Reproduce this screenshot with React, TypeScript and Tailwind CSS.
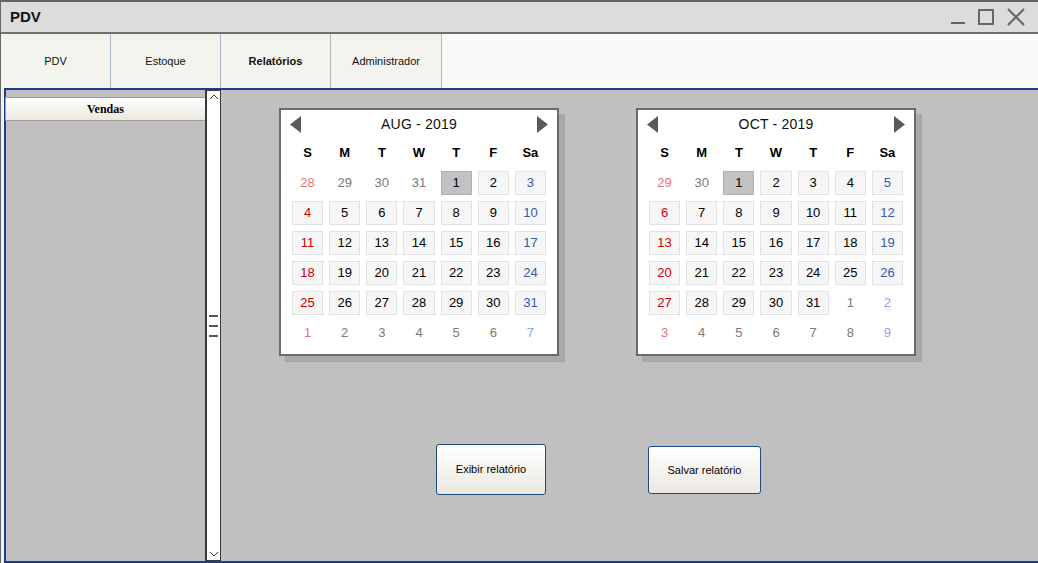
import React from "react";

type Cell = { d: number; out?: boolean; sel?: boolean };

const font = { fontFamily: '"Liberation Sans", Arial, sans-serif' };

function mk(days: number[], firstIn: number, lastIn: number, sel: number): Cell[] {
  // days: flat 42 numbers; indices [firstIn, lastIn] are inside the month
  return days.map((d, i) => ({ d, out: i < firstIn || i > lastIn, sel: i === sel }));
}

const range = (a: number, b: number) => Array.from({ length: b - a + 1 }, (_, i) => a + i);

const aug = mk([...range(28, 31), ...range(1, 31), ...range(1, 7)], 4, 34, 4);
const oct = mk([29, 30, ...range(1, 31), ...range(1, 9)], 2, 32, 2);

const dayNames = ["S", "M", "T", "W", "T", "F", "Sa"];

function cellColor(col: number, out?: boolean) {
  if (col === 0) return out ? "text-[#e57373]" : "text-[#cc0000]";
  if (col === 6) return out ? "text-[#8ea6d8]" : "text-[#3558b0]";
  return out ? "text-[#7a7a7a]" : "text-black";
}

function Arrow({ dir }: { dir: "left" | "right" }) {
  return (
    <svg width="11" height="17" viewBox="0 0 11 17">
      {dir === "left" ? (
        <polygon points="11,0 11,17 0,8.5" fill="#5a5a5a" />
      ) : (
        <polygon points="0,0 0,17 11,8.5" fill="#5a5a5a" />
      )}
    </svg>
  );
}

function Calendar({ title, cells }: { title: string; cells: Cell[] }) {
  return (
    <div
      className="w-[280px] h-[248px] bg-white border-2 border-[#6a6a6a] px-[11px] shadow-[6px_6px_0_#a8a8a8] shrink-0"
      style={font}
    >
      <div className="h-[28px] -mx-[2px] flex items-center justify-between">
        <Arrow dir="left" />
        <span className="text-[14px] text-[#111] tracking-[0.2px]">{title}</span>
        <Arrow dir="right" />
      </div>
      <div className="mt-[5px] h-[20px] grid grid-cols-7 gap-x-[6px] items-center">
        {dayNames.map((n, i) => (
          <span key={i} className="text-center text-[13px] font-bold text-black">
            {n}
          </span>
        ))}
      </div>
      <div className="mt-[8px] grid grid-cols-7 gap-x-[6px] gap-y-[6px]">
        {cells.map((c, i) => {
          const col = i % 7;
          const box = c.sel
            ? "bg-[#c2c2c2] border border-[#b0b0b0]"
            : c.out
            ? "border border-transparent"
            : "bg-[#f6f6f6] border border-[#e2e2e2]";
          return (
            <div
              key={i}
              className={`h-[24px] flex items-center justify-center text-[13px] ${box} ${cellColor(col, c.out)}`}
            >
              {c.d}
            </div>
          );
        })}
      </div>
    </div>
  );
}

export default function App() {
  const tabs = ["PDV", "Estoque", "Relatórios", "Administrador"];

  return (
    <div
      className="w-[1038px] h-[563px] flex flex-col border-t-2 border-l border-[#666] bg-[#f0f0f0] overflow-hidden"
      style={font}
    >
      {/* title bar */}
      <div className="h-[32px] shrink-0 bg-[#dcdcdc] border-b-2 border-[#6e6e6e] flex items-center justify-between pl-[9px] pr-[13px]">
        <span className="text-[15px] font-bold text-[#111]">PDV</span>
        <div className="flex items-center gap-[13px] text-[#666]">
          <svg width="14" height="18" viewBox="0 0 14 18">
            <rect x="0" y="14" width="14" height="2" fill="#666" />
          </svg>
          <svg width="16" height="16" viewBox="0 0 16 16">
            <rect x="1" y="1" width="14" height="14" fill="none" stroke="#666" strokeWidth="2" />
          </svg>
          <svg width="18" height="18" viewBox="0 0 18 18">
            <path d="M1 1 L17 17 M17 1 L1 17" stroke="#666" strokeWidth="2" />
          </svg>
        </div>
      </div>

      {/* tabs */}
      <div className="h-[54px] shrink-0 bg-[#fafafa] flex">
        {tabs.map((t, i) => (
          <div
            key={t}
            className={`h-full ${i === 3 ? "w-[111px]" : "w-[110px]"} bg-[#f4f4ee] border-r border-[#a9b7c4] flex items-center justify-center text-[11px] text-[#111] ${
              t === "Relatórios" ? "font-bold" : ""
            }`}
          >
            {t}
          </div>
        ))}
      </div>

      {/* content */}
      <div className="flex-1 flex pl-[3px]">
        <div className="flex-1 flex bg-[#c0c0c0] border-t-2 border-l-2 border-b-2 border-[#1f3c8c]">
          {/* list */}
          <div className="w-[199px] shrink-0 pt-[7px]">
            <div className="-ml-[1px] w-[201px] h-[24px] bg-gradient-to-b from-white to-[#ebe8e0] border border-[#a39d94] flex items-center justify-center text-[12px] font-bold text-black font-['Liberation_Serif',serif]">
              Vendas
            </div>
          </div>
          {/* scrollbar */}
          <div className="w-[16px] shrink-0 bg-white border-l-2 border-r border-t border-b border-[#3a3a3a] flex flex-col items-center justify-between py-[2px]">
            <svg width="10" height="8" viewBox="0 0 10 8">
              <path d="M1 6 L5 2 L9 6" fill="none" stroke="#333" strokeWidth="1" />
            </svg>
            <div className="flex flex-col gap-[8px]">
              <div className="w-[9px] h-[2px] bg-[#555]" />
              <div className="w-[9px] h-[2px] bg-[#555]" />
              <div className="w-[9px] h-[2px] bg-[#555]" />
            </div>
            <svg width="10" height="8" viewBox="0 0 10 8">
              <path d="M1 2 L5 6 L9 2" fill="none" stroke="#333" strokeWidth="1" />
            </svg>
          </div>

          {/* main */}
          <div className="flex-1 flex flex-col">
            <div className="flex pt-[18px] pl-[58px] gap-[77px]">
              <Calendar title="AUG - 2019" cells={aug} />
              <Calendar title="OCT - 2019" cells={oct} />
            </div>
            <div className="flex items-start pl-[215px] mt-[88px] gap-[102px]">
              <button className="w-[110px] h-[51px] rounded-[3px] border border-[#1e4a7e] bg-gradient-to-b from-white to-[#ebe8e0] text-[11px] text-black">
                Exibir relatório
              </button>
              <button className="mt-[2px] w-[113px] h-[48px] rounded-[3px] border border-[#1e4a7e] bg-gradient-to-b from-white to-[#ebe8e0] text-[11px] text-black">
                Salvar relatório
              </button>
            </div>
          </div>
        </div>
      </div>
    </div>
  );
}
